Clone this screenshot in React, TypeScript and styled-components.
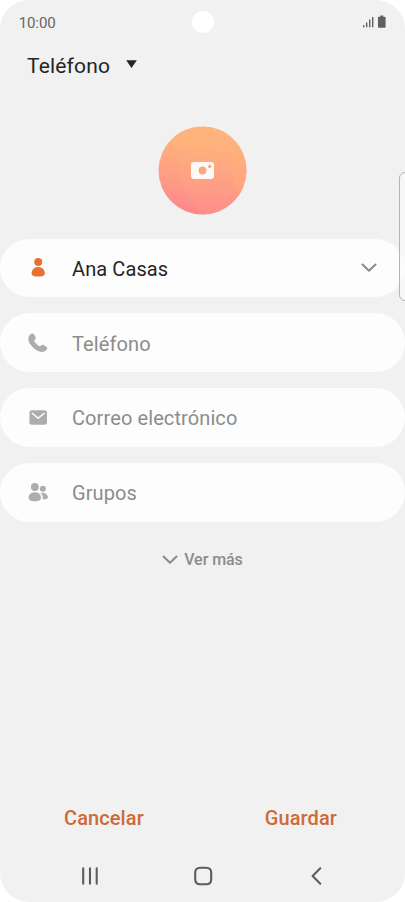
import React from "react";
import styled, { createGlobalStyle } from "styled-components";

const GlobalStyle = createGlobalStyle`
  *, *::before, *::after { box-sizing: border-box; }
  body { margin: 0; background: #fff; font-family: Roboto, "Liberation Sans", sans-serif; }
  button { border: 0; padding: 0; background: none; font: inherit; color: inherit; }
  svg { display: block; flex: none; }
`;

const Phone = styled.main`
  position: relative;
  display: flex;
  flex-direction: column;
  width: 405px;
  height: 902px;
  overflow: hidden;
  border-radius: 29px;
  background: #f1f1f1;
`;

const StatusBar = styled.header`
  display: grid;
  grid-template-columns: 1fr 22px 1fr;
  align-items: center;
  height: 44px;
  padding: 0 18px 0 19px;
  margin-left: -1px;
`;

const Clock = styled.time`
  font-size: 15px;
  line-height: 20px;
  letter-spacing: -0.1px;
  padding: 2px 0 0 0.7px;
  color: #666;
`;

const CameraHole = styled.span`
  width: 22px;
  height: 22px;
  border-radius: 50%;
  background: #fff;
`;

const StatusIcons = styled.div`
  display: flex;
  justify-content: flex-end;
`;

const StorageSelect = styled.button`
  display: flex;
  align-items: center;
  align-self: flex-start;
  gap: 16px;
  height: 44px;
  margin-left: 27px;
  font-size: 21px;
  line-height: 44px;
  letter-spacing: 0.18px;
  color: #252525;

  svg {
    margin-top: -4px;
  }
`;

const Avatar = styled.button`
  display: flex;
  align-items: center;
  justify-content: center;
  align-self: center;
  flex: none;
  width: 88px;
  height: 88px;
  margin-top: 38.5px;
  border-radius: 50%;
`;

const Fields = styled.section`
  display: flex;
  flex-direction: column;
  gap: 16px;
  margin-top: 24px;
`;

const Field = styled.div<{ $filled?: boolean }>`
  display: flex;
  align-items: center;
  height: 58.75px;
  padding: 0 28px 0 27px;
  border-radius: 30px;
  background: #fdfdfd;
  font-size: 20px;
  color: ${(p) => (p.$filled ? "#252525" : "#8c8c8c")};
`;

const FieldIcon = styled.span`
  display: flex;
  width: 45px;
  padding-top: 1px;
`;

const FieldText = styled.span`
  flex: 1;
  padding-top: 2px;
  line-height: 28px;
  letter-spacing: 0.1px;
`;

const MoreButton = styled.button`
  display: flex;
  align-items: center;
  align-self: center;
  gap: 6px;
  height: 28px;
  margin-top: 24px;
  font-size: 16px;
  font-weight: 500;
  letter-spacing: -0.05px;
  color: #8c8c8c;
`;

const Actions = styled.footer`
  display: flex;
  justify-content: space-between;
  margin-top: auto;
  padding: 0 68px 0 64px;
`;

const Action = styled.button`
  height: 32px;
  font-size: 20px;
  font-weight: 500;
  line-height: 32px;
  letter-spacing: 0.1px;
  color: #cd6a39;
`;

const NavBar = styled.nav`
  display: flex;
  justify-content: space-between;
  align-items: center;
  height: 52px;
  margin-top: 16px;
  padding: 0 78px;
`;

const EdgeHandle = styled.span`
  position: absolute;
  top: 172px;
  left: 399px;
  width: 12px;
  height: 129px;
  border: 1.5px solid #b4b4b4;
  border-radius: 6px;
  background: rgba(250, 250, 250, 0.65);
`;

const SignalIcon = () => (
  <svg width="25" height="16" viewBox="0 0 25 16" fill="#606060">
    <path d="M1 11.200h1.500v2H1zM4 8.500h1.400v4.700H4zM7 5.500h1.400v7.700H7zM10 3h1.400v10.200H10z" />
    <path d="M18.300 1.500h3v1.300h1.500q.8 0 .8.800v9.300q0 .8-.8.800h-6q-.8 0-.8-.8V3.600q0-.8.8-.8h1.500z" />
  </svg>
);

const AvatarArt = () => (
  <svg width="90" height="90" viewBox="-1 -1 90 90">
    <defs>
      <linearGradient id="avatarBase" x1=".56" y1="0" x2=".44" y2="1">
        <stop offset=".2" stopColor="#feb27c" />
        <stop offset=".65" stopColor="#fe9b84" />
        <stop offset="1" stopColor="#fe858e" />
      </linearGradient>
      <linearGradient id="avatarGlow" x1="0" y1="0" x2="0" y2="1">
        <stop offset=".2" stopColor="#feb27c" />
        <stop offset="1" stopColor="#fe948c" />
      </linearGradient>
      <clipPath id="avatarDisc">
        <circle cx="43.500" cy="43.500" r="44" />
      </clipPath>
    </defs>
    <g clipPath="url(#avatarDisc)">
      <rect x="-1" y="-1" width="90" height="90" fill="url(#avatarBase)" />
      <path d="M88-1H45C10 17 14 61 43 88h45z" fill="url(#avatarGlow)" opacity=".5" />
      <path d="M76 20c-5 16-4 34 5 48l7-10V20z" fill="#feb27c" opacity=".35" />
    </g>
    <rect x="32" y="35" width="23" height="17" rx="3" fill="#fdf9f7" />
    <circle cx="43.500" cy="43.500" r="3.900" fill="#fea582" />
    <circle cx="50.700" cy="39.400" r="1.700" fill="#fea582" />
  </svg>
);

const PersonIcon = () => (
  <svg width="22" height="22" viewBox="0 0 22 22" fill="#e87132">
    <circle cx="11.200" cy="5" r="4" />
    <path d="M4.600 16.500c0-3.900 2.800-6.600 6.600-6.600s6.700 2.700 6.700 6.600c0 2.400-3 3.100-6.700 3.100s-6.600-.7-6.600-3.100z" />
  </svg>
);

const PhoneIcon = () => (
  <svg width="22" height="22" viewBox="0 0 22 22" fill="#adadae">
    <path d="M2.700 3C4.200 1.200 5.900.9 7 2.200l1.300 2.300c.7 1.300.5 2.300-.5 3.200-.7.700-.7 1.300-.2 2.100 1.200 1.700 2.500 3 4.200 4.200.8.500 1.400.5 2-.2 1-1.100 2.100-1.200 3.200-.5l2.400 1.500c1.300.9 1.100 2.200-.3 3.500-2.400 2.200-6 2.100-9.500-.1-3.100-2-5.700-4.700-7.400-7.500C1 8 1 5.200 2.700 3z" />
  </svg>
);

const MailIcon = () => (
  <svg width="22" height="22" viewBox="0 0 22 22">
    <rect x="2.400" y="3.300" width="17.600" height="14.400" rx="2.500" fill="#adadae" />
    <path d="M5.300 6.400l5.900 4.800 5.900-4.800" fill="none" stroke="#fdfdfd" strokeWidth="1.400" strokeLinecap="round" strokeLinejoin="round" />
  </svg>
);

const GroupIcon = () => (
  <svg width="22" height="22" viewBox="0 0 22 22" fill="#adadae">
    <circle cx="7.800" cy="5" r="3.900" />
    <circle cx="15.900" cy="6.800" r="3" />
    <path d="M1.700 15.500c0-3.200 2.600-5.300 6.100-5.300s6.200 2.100 6.200 5.300c0 2.900-2.200 3.700-6.200 3.700s-6.100-.8-6.100-3.700z" />
    <path d="M13.500 10.900c4.200-.7 7.400 1.500 7.400 4.400 0 1.700-1.900 2-5.300 2 .7-2.500-.1-4.900-2.100-6.400z" />
  </svg>
);

const Chevron = () => (
  <svg width="16" height="12" viewBox="0 0 16 12">
    <path d="M1.500 2.500L8 8.700l6.500-6.200" fill="none" stroke="#8c8c8c" strokeWidth="2.100" strokeLinecap="round" strokeLinejoin="round" />
  </svg>
);

const NavIcon = ({ d }: { d: string }) => (
  <svg width="22" height="22" viewBox="0 0 22 22" fill="none" stroke="#5c5c5c" strokeWidth="2.100" strokeLinecap="round" strokeLinejoin="round">
    <path d={d} />
  </svg>
);

const emptyFields = [
  { label: "Teléfono", icon: <PhoneIcon /> },
  { label: "Correo electrónico", icon: <MailIcon /> },
  { label: "Grupos", icon: <GroupIcon /> },
];

export default function App() {
  return (
    <>
      <GlobalStyle />
      <Phone>
        <StatusBar>
          <Clock>10:00</Clock>
          <CameraHole />
          <StatusIcons>
            <SignalIcon />
          </StatusIcons>
        </StatusBar>
        <StorageSelect>
          Teléfono
          <svg width="11" height="8" viewBox="0 0 11 8">
            <path d="M.2.200h10.600L5.500 7.900z" fill="#252525" />
          </svg>
        </StorageSelect>
        <Avatar>
          <AvatarArt />
        </Avatar>
        <Fields>
          <Field $filled>
            <FieldIcon>
              <PersonIcon />
            </FieldIcon>
            <FieldText>Ana Casas</FieldText>
            <Chevron />
          </Field>
          {emptyFields.map((field) => (
            <Field key={field.label}>
              <FieldIcon>{field.icon}</FieldIcon>
              <FieldText>{field.label}</FieldText>
            </Field>
          ))}
        </Fields>
        <MoreButton>
          <Chevron />
          Ver más
        </MoreButton>
        <Actions>
          <Action>Cancelar</Action>
          <Action>Guardar</Action>
        </Actions>
        <NavBar>
          <NavIcon d="M5.200 3.300v15.400M12 3.300v15.400M18.700 3.300v15.400" />
          <NavIcon d="M8.200 2.800h6q5 0 5 5v6.400q0 5-5 5h-6q-5 0-5-5V7.800q0-5 5-5z" />
          <NavIcon d="M15.300 3.300L7.600 11l7.700 7.700" />
        </NavBar>
        <EdgeHandle />
      </Phone>
    </>
  );
}
